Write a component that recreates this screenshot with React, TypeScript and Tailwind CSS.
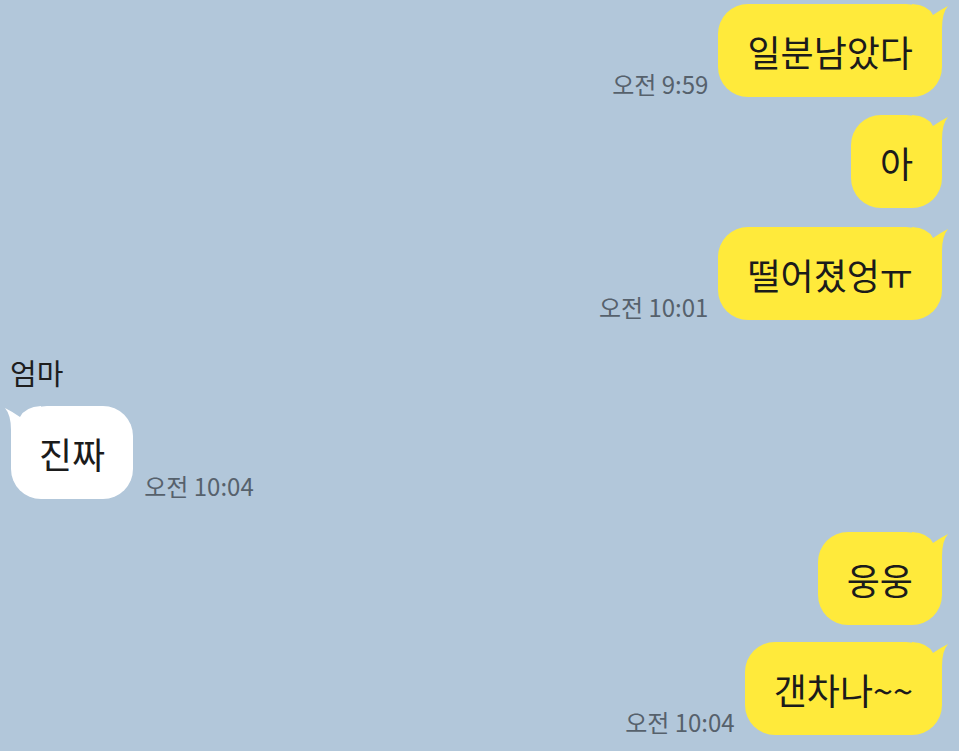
const font = { fontFamily: '"Noto Sans CJK KR", "Noto Sans", sans-serif' };

type Msg = {
  text: string;
  time?: string;
  mt: string;
};

function Horn({ color, left }: { color: string; left?: boolean }) {
  return (
    <svg
      width="38"
      height="40"
      viewBox="0 0 38 40"
      className={left ? "absolute top-0 left-[-8px] -scale-x-100" : "absolute top-0 right-[-8px]"}
    >
      <path d="M0 0 Q16 1 21 11 Q28 6 36 2 Q30 9 30 24 L30 40 L0 40 Z" fill={color} />
    </svg>
  );
}

function MyBubble({ text, time, mt }: Msg) {
  return (
    <div className={`flex justify-end items-end gap-[10px] pr-[17px] ${mt}`}>
      {time && <span className="text-[24px] leading-[27px] text-[#56616c] whitespace-nowrap">{time}</span>}
      <div className="relative h-[93px] flex items-center px-[29px] bg-[#ffea3b] rounded-[30px] rounded-tr-[36px]">
        <Horn color="#ffea3b" />
        <span className="relative text-[36px] leading-[42px] text-[#1b1b1b] whitespace-nowrap">{text}</span>
      </div>
    </div>
  );
}

export default function App() {
  return (
    <div className="w-[959px] h-[751px] bg-[#b2c7da] overflow-hidden flex flex-col" style={font}>
      <MyBubble text="일분남았다" time="오전 9:59" mt="mt-[4px]" />
      <MyBubble text="아" mt="mt-[18px]" />
      <MyBubble text="떨어졌엉ㅠ" time="오전 10:01" mt="mt-[19px]" />

      <div className="mt-[35px] pl-[10px] text-[29px] leading-[34px] text-[#1e1e1e]">엄마</div>
      <div className="flex items-end gap-[11px] pl-[11px] mt-[17px]">
        <div className="relative h-[93px] flex items-center px-[28px] bg-white rounded-[30px] rounded-tl-[36px]">
          <Horn color="#ffffff" left />
          <span className="relative text-[36px] leading-[42px] text-[#1b1b1b] whitespace-nowrap">진짜</span>
        </div>
        <span className="text-[24px] leading-[27px] text-[#56616c] whitespace-nowrap">오전 10:04</span>
      </div>

      <MyBubble text="웅웅" mt="mt-[33px]" />
      <MyBubble text="갠차나~~" time="오전 10:04" mt="mt-[17px]" />
    </div>
  );
}
